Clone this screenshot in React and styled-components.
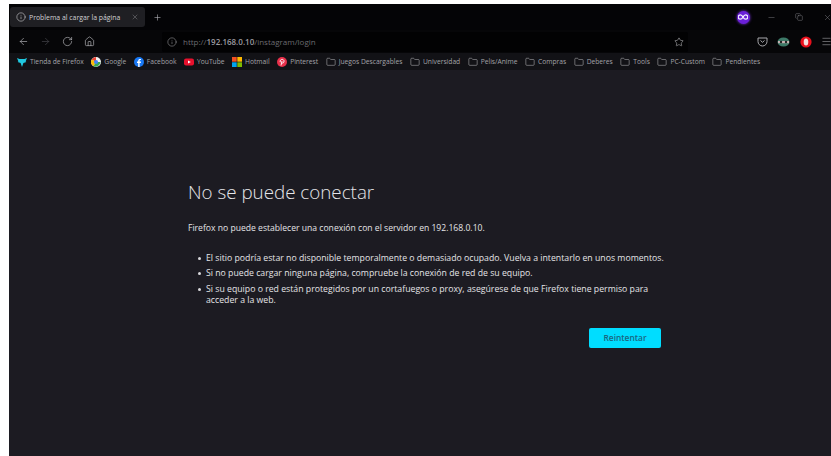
import styled, { createGlobalStyle } from "styled-components";
import {
  ArrowLeft,
  ArrowRight,
  RotateCw,
  Home,
  Info,
  Star,
  X,
  Plus,
  Minus,
  Copy,
  Menu,
  Folder,
} from "lucide-react";

const GlobalStyle = createGlobalStyle`
  html, body {
    margin: 0;
    padding: 0;
    background: #fff;
    overflow: hidden;
  }
  * { box-sizing: border-box; }
`;

const Window = styled.div`
  margin: 4px 0 0 9px;
  width: 822px;
  height: 452px;
  display: flex;
  flex-direction: column;
  background: #1c1b22;
  font-family: "Open Sans", "Noto Sans", sans-serif;
  color: #fbfbfe;
  overflow: hidden;
`;

const TabStrip = styled.div`
  height: 26px;
  flex-shrink: 0;
  display: flex;
  align-items: center;
  background: #040406;
  padding: 3px 0 3px 1px;
`;

const Tab = styled.div`
  width: 135px;
  height: 20px;
  display: flex;
  align-items: center;
  gap: 3px;
  padding: 0 6px;
  background: #1f1f23;
  border-radius: 3px;
  font-size: 6.9px;
  font-weight: 500;
  color: #d0d0d4;
  white-space: nowrap;
`;

const TabTitle = styled.span`
  flex: 1;
`;

const NewTab = styled.span`
  display: flex;
  margin-left: 8px;
  color: #b4b4b8;
`;

const CaptionButtons = styled.div`
  margin-left: auto;
  margin-right: -10px;
  display: flex;
  align-items: center;
  color: #85858a;
`;

const Avatar = styled.span`
  width: 13px;
  height: 13px;
  margin-right: 7.5px;
  border-radius: 50%;
  background: #6a1fd8;
  box-shadow: 0 0 3px #7f35e8;
  display: flex;
  align-items: center;
  justify-content: center;
`;

const CaptionButton = styled.span`
  width: 28px;
  display: flex;
  justify-content: center;
`;

const NavBar = styled.div`
  height: 23px;
  flex-shrink: 0;
  display: flex;
  align-items: center;
  background: #060608;
  padding-left: 9px;
`;

const NavButton = styled.span`
  width: 22px;
  flex-shrink: 0;
  display: flex;
  color: ${({ $dim }) => ($dim ? "#45454a" : "#b0b0b4")};
`;

const UrlBar = styled.div`
  width: 526px;
  height: 20px;
  flex-shrink: 0;
  margin-left: 56px;
  display: flex;
  align-items: center;
  padding: 0 4px 0 5px;
  background: #020203;
  border-radius: 2px;
  font-size: 8px;
  color: #6a6a6f;
`;

const UrlInfo = styled.span`
  display: flex;
  margin-right: 6px;
  color: #a0a0a4;
`;

const UrlHost = styled.span`
  color: #9c9ca1;
  font-weight: 600;
`;

const UrlStar = styled.span`
  margin-left: auto;
  display: flex;
  color: #c4c4c8;
`;

const ToolIcons = styled.div`
  margin-left: 68.5px;
  flex-shrink: 0;
  display: flex;
  align-items: center;
  gap: 9.5px;
`;

const BookmarksBar = styled.div`
  height: 17px;
  flex-shrink: 0;
  display: flex;
  align-items: center;
  gap: 7.5px;
  padding-left: 8px;
  background: #121216;
  font-size: 6.7px;
  font-weight: 500;
  color: #a4a4a9;
  white-space: nowrap;
`;

const Bookmark = styled.span`
  display: flex;
  align-items: center;
  gap: 3px;
`;

const Content = styled.main`
  flex: 1;
  padding: 109px 0 0 179px;
  font-size: 8.6px;
  color: #e4e4e7;
`;

const Panel = styled.div`
  width: 483px;
`;

const Heading = styled.h1`
  margin: 0;
  font-size: 18.8px;
  line-height: 27px;
  font-weight: 300;
  color: #e6e6ea;
`;

const Lead = styled.p`
  margin: 16px 0 0;
  line-height: 12px;
`;

const Reasons = styled.ul`
  margin: 18.5px 0 0;
  padding: 0 0 0 18px;
  list-style: none;
  font-size: 8.72px;
`;

const Reason = styled.li`
  position: relative;
  line-height: 11.5px;
  margin-bottom: 4px;

  &::before {
    content: "";
    position: absolute;
    left: -8px;
    top: 4px;
    width: 3px;
    height: 3px;
    border-radius: 50%;
    background: #d8d8dc;
  }
`;

const Actions = styled.div`
  margin-top: 21px;
  display: flex;
  justify-content: flex-end;
  padding-right: 10px;
`;

const RetryButton = styled.button`
  width: 72px;
  height: 20px;
  border: 0;
  border-radius: 2px;
  background: #00ddff;
  color: #1a667f;
  font-family: inherit;
  font-size: 8.4px;
  font-weight: 600;
  padding: 0;
`;

const FolderIcon = () => <Folder size={10} strokeWidth={1.2} color="#c0c0c4" />;

const StoreIcon = () => (
  <svg width="10" height="10" viewBox="0 0 10 10">
    <path d="M0 1l2.5 1h5L10 1 8.6 4.4 9.4 5 6.4 6 5 10 3.6 6 .6 5l.8-.6z" fill="#20c8e0" />
  </svg>
);

const GoogleIcon = () => (
  <svg width="10" height="10" viewBox="0 0 10 10">
    <circle cx="5" cy="5" r="5" fill="#f0f0f0" />
    <path d="M5 5V0a5 5 0 0 0-4.3 2.5z" fill="#ea4335" />
    <path d="M.7 2.5a5 5 0 0 0 1.8 6.8L5 5z" fill="#fbbc05" />
    <path d="M2.5 9.3A5 5 0 0 0 9.5 5H5z" fill="#34a853" />
    <circle cx="5" cy="5" r="2.1" fill="#4285f4" />
  </svg>
);

const FacebookIcon = () => (
  <svg width="10" height="10" viewBox="0 0 10 10">
    <circle cx="5" cy="5" r="5" fill="#1877f2" />
    <path d="M5.6 10V6h1.2l.2-1.4H5.6v-.9c0-.4.2-.7.7-.7H7V1.9h-1c-1.1 0-1.8.7-1.8 1.7v1H3V6h1.2v4z" fill="#fff" />
  </svg>
);

const YoutubeIcon = () => (
  <svg width="10" height="10" viewBox="0 0 10 10">
    <rect y="1.5" width="10" height="7" rx="2" fill="#e8112d" />
    <path d="M4 3.4 6.8 5 4 6.6z" fill="#fff" />
  </svg>
);

const HotmailIcon = () => (
  <svg width="10" height="10" viewBox="0 0 10 10">
    <rect width="4.7" height="4.7" fill="#f25022" />
    <rect x="5.3" width="4.7" height="4.7" fill="#ffb900" />
    <rect y="5.3" width="4.7" height="4.7" fill="#00a4ef" />
    <rect x="5.3" y="5.3" width="4.7" height="4.7" fill="#7fba00" />
  </svg>
);

const PinterestIcon = () => (
  <svg width="10" height="10" viewBox="0 0 10 10">
    <circle cx="5" cy="5" r="5" fill="#e8304a" />
    <path d="M4 8.5 5 4M3.3 5.2C2.6 3.4 4 2.3 5.3 2.4c1.4.1 2 1.3 1.6 2.6-.4 1.2-1.6 1.4-2.1.7" fill="none" stroke="#fff" strokeWidth=".9" />
  </svg>
);

const PocketIcon = () => (
  <svg width="11" height="11" viewBox="0 0 11 11">
    <path d="M1 2h9v3.5a4.5 4.5 0 0 1-9 0z" fill="none" stroke="#a8a8ac" strokeWidth="1" />
    <path d="M3.5 4.5 5.5 6.3l2-1.8" fill="none" stroke="#a8a8ac" strokeWidth="1" />
  </svg>
);

const MaskIcon = () => (
  <svg width="13" height="10" viewBox="0 0 13 10">
    <ellipse cx="6.5" cy="5" rx="6" ry="4.5" fill="#3d7a68" />
    <path d="M1 4h11v2.2H1z" fill="#c8b4b4" />
    <circle cx="4" cy="5" r="1.2" fill="#222" />
    <circle cx="9" cy="5" r="1.2" fill="#222" />
  </svg>
);

const OperaIcon = () => (
  <svg width="12" height="12" viewBox="0 0 12 12">
    <circle cx="6" cy="6" r="5.6" fill="#e8101c" />
    <ellipse cx="6" cy="6" rx="2.3" ry="3.6" fill="#f6dede" />
  </svg>
);

const InfinityIcon = () => (
  <svg width="10" height="6" viewBox="0 0 10 6">
    <path d="M5 3C4 1.2 3.2.8 2.4.8a2.2 2.2 0 0 0 0 4.4C3.2 5.2 4 4.8 5 3c1-1.8 1.8-2.2 2.6-2.2a2.2 2.2 0 0 1 0 4.4C6.8 5.2 6 4.8 5 3z" fill="none" stroke="#f2ecff" strokeWidth="1.3" />
  </svg>
);

const bookmarks = [
  { label: "Tienda de Firefox", icon: <StoreIcon /> },
  { label: "Google", icon: <GoogleIcon /> },
  { label: "Facebook", icon: <FacebookIcon /> },
  { label: "YouTube", icon: <YoutubeIcon /> },
  { label: "Hotmail", icon: <HotmailIcon /> },
  { label: "Pinterest", icon: <PinterestIcon /> },
  { label: "Juegos Descargables", icon: <FolderIcon /> },
  { label: "Universidad", icon: <FolderIcon /> },
  { label: "Pelis/Anime", icon: <FolderIcon /> },
  { label: "Compras", icon: <FolderIcon /> },
  { label: "Deberes", icon: <FolderIcon /> },
  { label: "Tools", icon: <FolderIcon /> },
  { label: "PC-Custom", icon: <FolderIcon /> },
  { label: "Pendientes", icon: <FolderIcon /> },
];

export default function App() {
  return (
    <>
      <GlobalStyle />
      <Window>
        <TabStrip>
          <Tab>
            <Info size={10} strokeWidth={1.4} />
            <TabTitle>Problema al cargar la página</TabTitle>
            <X size={8} strokeWidth={1.4} color="#8c8c90" />
          </Tab>
          <NewTab>
            <Plus size={9} strokeWidth={1.6} />
          </NewTab>
          <CaptionButtons>
            <Avatar>
              <InfinityIcon />
            </Avatar>
            <CaptionButton>
              <Minus size={9} strokeWidth={1.2} />
            </CaptionButton>
            <CaptionButton>
              <Copy size={8} strokeWidth={1.4} />
            </CaptionButton>
            <CaptionButton>
              <X size={9} strokeWidth={1.2} />
            </CaptionButton>
          </CaptionButtons>
        </TabStrip>
        <NavBar>
          <NavButton>
            <ArrowLeft size={11} strokeWidth={1.5} />
          </NavButton>
          <NavButton $dim>
            <ArrowRight size={11} strokeWidth={1.5} />
          </NavButton>
          <NavButton>
            <RotateCw size={11} strokeWidth={1.5} />
          </NavButton>
          <NavButton>
            <Home size={11} strokeWidth={1.5} />
          </NavButton>
          <UrlBar>
            <UrlInfo>
              <Info size={10} strokeWidth={1.3} />
            </UrlInfo>
            http://<UrlHost>192.168.0.10</UrlHost>/instagram/login
            <UrlStar>
              <Star size={10} strokeWidth={1.3} />
            </UrlStar>
          </UrlBar>
          <ToolIcons>
            <PocketIcon />
            <MaskIcon />
            <OperaIcon />
            <Menu size={11} strokeWidth={1.3} color="#a0a0a4" />
          </ToolIcons>
        </NavBar>
        <BookmarksBar>
          {bookmarks.map((bookmark) => (
            <Bookmark key={bookmark.label}>
              {bookmark.icon}
              {bookmark.label}
            </Bookmark>
          ))}
        </BookmarksBar>
        <Content>
          <Panel>
            <Heading>No se puede conectar</Heading>
            <Lead>Firefox no puede establecer una conexión con el servidor en 192.168.0.10.</Lead>
            <Reasons>
              <Reason>El sitio podría estar no disponible temporalmente o demasiado ocupado. Vuelva a intentarlo en unos momentos.</Reason>
              <Reason>Si no puede cargar ninguna página, compruebe la conexión de red de su equipo.</Reason>
              <Reason>Si su equipo o red están protegidos por un cortafuegos o proxy, asegúrese de que Firefox tiene permiso para acceder a la web.</Reason>
            </Reasons>
            <Actions>
              <RetryButton>Reintentar</RetryButton>
            </Actions>
          </Panel>
        </Content>
      </Window>
    </>
  );
}
